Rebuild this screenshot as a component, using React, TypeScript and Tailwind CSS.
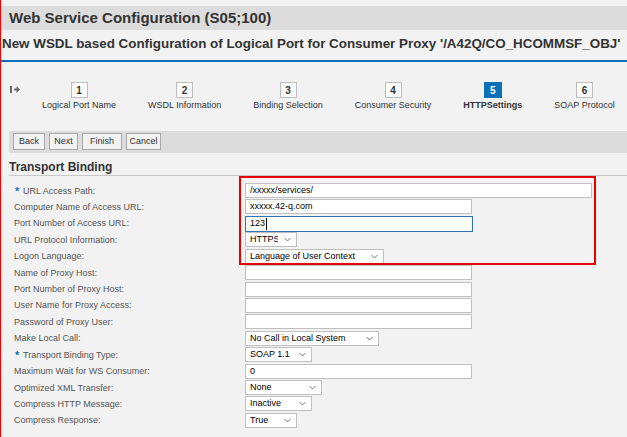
import React from "react";

// SAP GUI style "Web Service Configuration" wizard, HTTP settings step.

const BLUE = "#0b6fba";

type Field =
  | { kind: "input"; width: number; value?: string; focused?: boolean }
  | { kind: "select"; width: number; value: string };

type Row = { label: string; required?: boolean; field: Field };

const rows: Row[] = [
  { label: "URL Access Path:", required: true, field: { kind: "input", width: 347, value: "/xxxxx/services/" } },
  { label: "Computer Name of Access URL:", field: { kind: "input", width: 227, value: "xxxxx.42-q.com" } },
  { label: "Port Number of Access URL:", field: { kind: "input", width: 228, value: "123", focused: true } },
  { label: "URL Protocol Information:", field: { kind: "select", width: 52, value: "HTTPS" } },
  { label: "Logon Language:", field: { kind: "select", width: 139, value: "Language of User Context" } },
  { label: "Name of Proxy Host:", field: { kind: "input", width: 227 } },
  { label: "Port Number of Proxy Host:", field: { kind: "input", width: 227 } },
  { label: "User Name for Proxy Access:", field: { kind: "input", width: 227 } },
  { label: "Password of Proxy User:", field: { kind: "input", width: 227 } },
  { label: "Make Local Call:", field: { kind: "select", width: 134, value: "No Call in Local System" } },
  { label: "Transport Binding Type:", required: true, field: { kind: "select", width: 67, value: "SOAP 1.1" } },
  { label: "Maximum Wait for WS Consumer:", field: { kind: "input", width: 227, value: "0" } },
  { label: "Optimized XML Transfer:", field: { kind: "select", width: 77, value: "None" } },
  { label: "Compress HTTP Message:", field: { kind: "select", width: 67, value: "Inactive" } },
  { label: "Compress Response:", field: { kind: "select", width: 52, value: "True" } },
];

const steps = [
  { n: 1, label: "Logical Port Name" },
  { n: 2, label: "WSDL Information" },
  { n: 3, label: "Binding Selection" },
  { n: 4, label: "Consumer Security" },
  { n: 5, label: "HTTPSettings", active: true },
  { n: 6, label: "SOAP Protocol" },
];

function Chevron() {
  return (
    <svg width="7" height="5" viewBox="0 0 7 5" fill="none">
      <path d="M0.5 1 L3.5 4 L6.5 1" stroke="#7a7a7a" strokeWidth="1" />
    </svg>
  );
}

function FieldBox({ field }: { field: Field }) {
  if (field.kind === "select") {
    return (
      <div
        className="flex h-[15px] items-center border border-[#bfbfbf] bg-white text-[9px] text-black"
        style={{ width: field.width }}
      >
        <span className="flex-1 overflow-hidden whitespace-nowrap pl-[4px] leading-[13px]">{field.value}</span>
        <span className="flex w-[18px] shrink-0 justify-center">
          <Chevron />
        </span>
      </div>
    );
  }
  return (
    <div
      className={
        field.focused
          ? "flex h-[16px] items-center border border-[#2f76b8] bg-white pl-[4px] text-[9px] text-black"
          : "flex h-[15px] items-center border border-[#bfbfbf] bg-white pl-[4px] text-[9px] text-black"
      }
      style={{ width: field.width }}
    >
      <span className="whitespace-nowrap leading-[13px]">{field.value}</span>
      {field.focused && <span className="ml-[1px] h-[12px] w-[1px] bg-black" />}
    </div>
  );
}

export default function App() {
  return (
    <div className="relative h-[437px] w-[627px] overflow-hidden border-l border-[#ff0000] bg-[#f2f2f2] pt-[6px] font-['Liberation_Sans',Arial,sans-serif] text-[#333]">
      {/* title */}
      <div className="flex h-[24px] items-center bg-[#dcdcdc] pl-[8px] text-[15px] font-bold leading-[18px] text-[#333]">
        Web Service Configuration (S05;100)
      </div>

      {/* subtitle */}
      <div
        className="h-[32px] whitespace-nowrap border-b-2 pl-[1px] pt-[6px] text-[13.4px] font-bold leading-[16px] text-[#333]"
        style={{ borderColor: BLUE }}
      >
        New WSDL based Configuration of Logical Port for Consumer Proxy '/A42Q/CO_HCOMMSF_OBJ'
      </div>

      {/* roadmap */}
      <div className="flex h-[69px] items-start pl-[9px] pt-[20px]">
        <svg width="10" height="7" viewBox="0 0 10 7" className="mt-[4px] shrink-0">
          <rect x="0" y="0" width="2" height="7" fill="#6b6b6b" />
          <rect x="4" y="2.5" width="3" height="2" fill="#6b6b6b" />
          <path d="M6.5 0 L10 3.5 L6.5 7 Z" fill="#6b6b6b" />
        </svg>
        <div className="ml-[22px] flex gap-[32px]">
          {steps.map((s) => (
            <div key={s.n} className="flex flex-col items-center">
              <div
                className={
                  s.active
                    ? "flex h-[16px] w-[18px] items-center justify-center text-[10px] font-bold text-white"
                    : "flex h-[16px] w-[17px] items-center justify-center border border-[#bdbdbd] bg-white text-[10px] font-bold text-[#333]"
                }
                style={s.active ? { backgroundColor: BLUE } : undefined}
              >
                {s.n}
              </div>
              <div
                className={
                  s.active
                    ? "mt-[1px] whitespace-nowrap text-[9px] font-bold leading-[13px] text-[#333]"
                    : "mt-[1px] whitespace-nowrap text-[9px] leading-[13px] text-[#333]"
                }
              >
                {s.label}
              </div>
            </div>
          ))}
        </div>
      </div>

      {/* toolbar */}
      <div className="ml-[8px] flex h-[22px] items-start gap-[4px] bg-[#dcdcdc] pl-[4px] pt-[2px]">
        {[
          ["Back", "w-[32px]"],
          ["Next", "w-[29px]"],
          ["Finish", "w-[40px]"],
          ["Cancel", "w-[35px]"],
        ].map(([t, w]) => (
          <div
            key={t}
            className={`${w} flex h-[17px] items-center justify-center border border-[#a9a9a9] bg-[#f2f2f2] text-[9px] text-[#333]`}
          >
            {t}
          </div>
        ))}
      </div>

      {/* section header */}
      <div className="ml-[8px] h-[23px] border-b border-[#c8c8c8] pt-[7px] text-[12px] font-bold leading-[14px] text-[#333]">
        Transport Binding
      </div>

      {/* form */}
      <div className="mt-[7px] grid grid-cols-[231px_1fr] pl-[13px]">
        {rows.map((r) => (
          <React.Fragment key={r.label}>
            <div className="flex h-[16.43px] items-start">
              <div className="flex h-[15px] items-center whitespace-nowrap text-[9px] leading-[12px] text-[#555]">
                {r.required && (
                  <span className="mr-[1px] w-[8px] pl-[1px] text-[11px] font-bold leading-[10px]" style={{ color: BLUE }}>
                    *
                  </span>
                )}
                {r.label}
              </div>
            </div>
            <div className="h-[16.43px]">
              <FieldBox field={r.field} />
            </div>
          </React.Fragment>
        ))}
      </div>

      {/* highlight annotation */}
      <div className="pointer-events-none absolute left-[238px] top-[176px] h-[89px] w-[357px] border-2 border-[#e60000]" />
    </div>
  );
}
